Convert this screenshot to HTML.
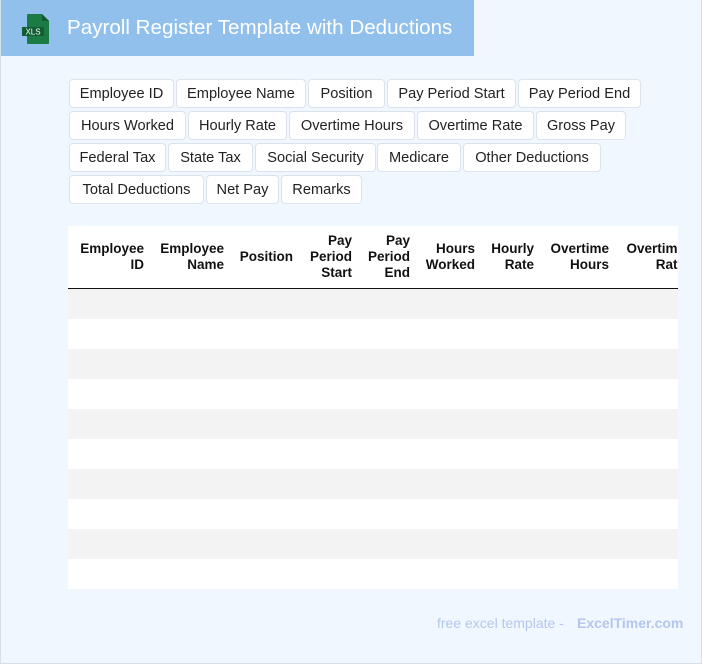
<!DOCTYPE html>
<html><head><meta charset="utf-8"><style>
*{margin:0;padding:0;box-sizing:border-box}
body{width:702px;height:664px;background:#f0f7ff;font-family:"Liberation Sans",Arial,sans-serif;position:relative;overflow:hidden}
.frame{position:absolute;left:0;top:0;width:702px;height:664px;border:1px solid #d6e0ea;border-top:none}
.hdr{position:absolute;left:1px;top:0;width:473px;height:56px;background:#91c0ec}
.title{position:absolute;left:67px;top:16px;color:#fff;font-size:20.6px;white-space:nowrap}
.tag{position:absolute;height:29px;background:#fff;border:1px solid #dde3ea;border-radius:4px;font-size:14.6px;color:#222;line-height:28px;text-align:center;white-space:nowrap}
.tbl{position:absolute;left:68px;top:226px;width:610px;height:363px;background:#fff;overflow:hidden}
.line{position:absolute;left:0;top:62px;width:610px;height:1.5px;background:#111}
.row{position:absolute;left:0;width:610px;height:30px;background:#f3f3f3}
.th{position:absolute;top:0;height:62px;display:flex;align-items:center;justify-content:flex-end;text-align:right;font-weight:bold;font-size:13.5px;line-height:16px;color:#111;white-space:nowrap}
.foot{position:absolute;top:615px;font-size:14px;color:#b4c6ee}
</style></head><body>
<div class="frame"></div>
<div class="hdr"></div>
<svg style="position:absolute;left:20px;top:13px" width="32" height="32" viewBox="0 0 32 32">
<path d="M8 1h14l7 7v22a1 1 0 0 1-1 1H8a1 1 0 0 1-1-1V2a1 1 0 0 1 1-1z" fill="#1c7a45"/>
<path d="M22 1v7h7z" fill="#125a31"/>
<rect x="2" y="14" width="22" height="9" fill="#0e5e32"/>
<text x="13" y="21.5" font-size="8" fill="#fff" text-anchor="middle" font-family="Liberation Sans">XLS</text>
</svg>
<div class="title">Payroll Register Template with Deductions</div>

<div class="tag" style="left:69px;top:79px;width:105px">Employee ID</div>
<div class="tag" style="left:176px;top:79px;width:130px">Employee Name</div>
<div class="tag" style="left:308px;top:79px;width:77px">Position</div>
<div class="tag" style="left:387px;top:79px;width:129px">Pay Period Start</div>
<div class="tag" style="left:518px;top:79px;width:123px">Pay Period End</div>

<div class="tag" style="left:69px;top:111px;width:117px">Hours Worked</div>
<div class="tag" style="left:188px;top:111px;width:99px">Hourly Rate</div>
<div class="tag" style="left:289px;top:111px;width:126px">Overtime Hours</div>
<div class="tag" style="left:417px;top:111px;width:117px">Overtime Rate</div>
<div class="tag" style="left:536px;top:111px;width:90px">Gross Pay</div>

<div class="tag" style="left:69px;top:143px;width:97px">Federal Tax</div>
<div class="tag" style="left:168px;top:143px;width:85px">State Tax</div>
<div class="tag" style="left:255px;top:143px;width:121px">Social Security</div>
<div class="tag" style="left:377px;top:143px;width:84px">Medicare</div>
<div class="tag" style="left:463px;top:143px;width:138px">Other Deductions</div>

<div class="tag" style="left:69px;top:175px;width:135px">Total Deductions</div>
<div class="tag" style="left:206px;top:175px;width:73px">Net Pay</div>
<div class="tag" style="left:281px;top:175px;width:81px">Remarks</div>

<div class="tbl">
<div class="th" style="right:534px">Employee<br>ID</div>
<div class="th" style="right:454px">Employee<br>Name</div>
<div class="th" style="right:385px">Position</div>
<div class="th" style="right:326px">Pay<br>Period<br>Start</div>
<div class="th" style="right:268px">Pay<br>Period<br>End</div>
<div class="th" style="right:203px">Hours<br>Worked</div>
<div class="th" style="right:144px">Hourly<br>Rate</div>
<div class="th" style="right:69px">Overtime<br>Hours</div>
<div class="th" style="left:556px;width:61px">Overtime<br>Rate</div>
<div class="line"></div>
<div class="row" style="top:63px"></div>
<div class="row" style="top:123px"></div>
<div class="row" style="top:183px"></div>
<div class="row" style="top:243px"></div>
<div class="row" style="top:303px"></div>
</div>

<div class="foot" style="left:437px">free excel template -</div>
<div class="foot" style="left:577px;font-weight:bold">ExcelTimer.com</div>
</body></html>
